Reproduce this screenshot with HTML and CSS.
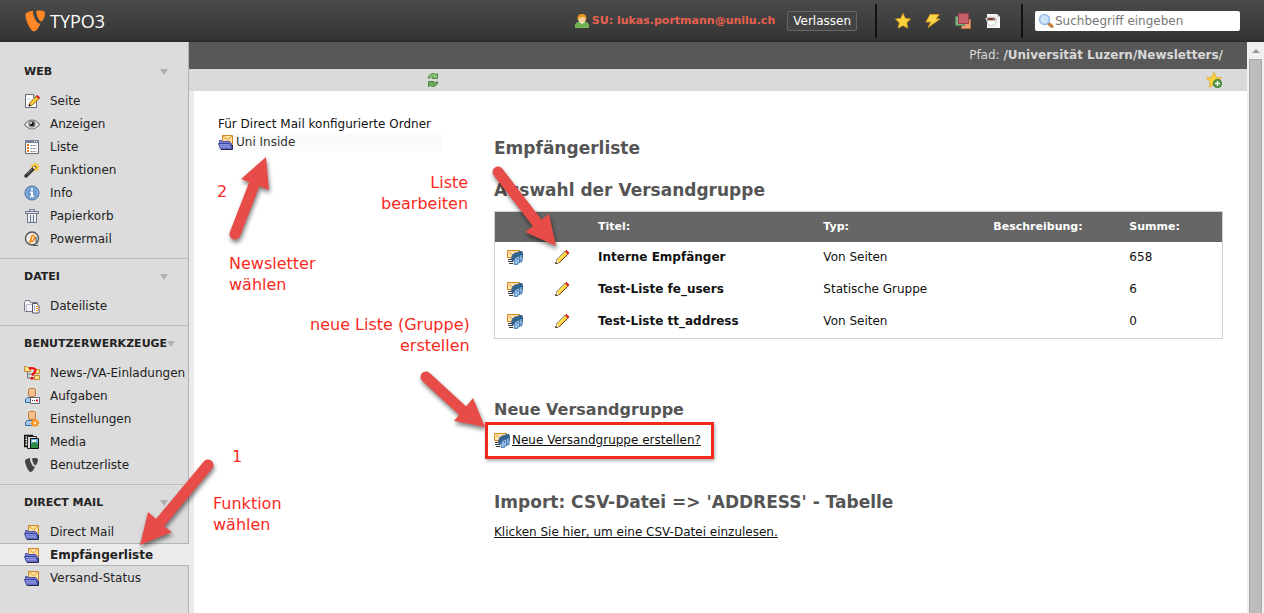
FILE: index.html
```
<!DOCTYPE html>
<html lang="de">
<head>
    <meta charset="UTF-8">
    <meta name="viewport" content="width=device-width, initial-scale=1.0">
    <title>TYPO3 - Empfängerliste</title>
    <link rel="stylesheet" href="styles.css">
</head>
<body>
    <!-- Icon sprite -->
    <svg class="sprite" width="0" height="0" aria-hidden="true">
        <symbol id="i-page" viewBox="0 0 16 16">
            <path d="M1.5 1.5h8l3 3v10h-11z" fill="#fff" stroke="#667"/>
            <path d="M9.500 1.500v3h3" fill="#cde" stroke="#778"/>
            <path d="M3 12h5M3 6h4" stroke="#ccd"/>
            <path d="M5 13l1-3.500 7-7 2.500 2.500-7 7z" fill="#fc3" stroke="#754a10" stroke-width=".8"/>
            <path d="M12 3.500l1.500-1.500 2.500 2.500-1.500 1.500z" fill="#d22"/>
            <path d="M5 13l.5-1.500 1 1z" fill="#111" stroke="#111"/>
        </symbol>
        <symbol id="i-eye" viewBox="0 0 16 16">
            <path d="M.5 8.500Q4 4 8 4t7.500 4.500Q12 13 8 13T.5 8.500z" fill="#eee" stroke="#777" stroke-width="1.200"/>
            <circle cx="8" cy="8" r="3.600" fill="#777"/>
            <circle cx="8" cy="8" r="1.900" fill="#111"/>
            <circle cx="7" cy="7" r="1" fill="#fff"/>
        </symbol>
        <symbol id="i-list" viewBox="0 0 16 16">
            <path d="M1.500 1.500h13v13h-13z" fill="#fff" stroke="#667"/>
            <path d="M1 1h14v3H1z" fill="#77839a"/>
            <path d="M12 2h1v1h-1zM10 2h1v1h-1z" fill="#fff"/>
            <path d="M3 5h2v2H3zM3 8h2v2H3zM3 11h2v2H3z" fill="#f07818"/>
            <path d="M6.500 6.500h6M6.500 9.500h6M6.500 12.500h6" stroke="#889" stroke-dasharray="2 .6"/>
        </symbol>
        <symbol id="i-wand" viewBox="0 0 16 16">
            <path d="M11 0l1 3 3-2-1 3 2 1-2 1 1 3-3-1-2 2-1-3-3 0 2-2-2-2 3 0z" fill="#fbc52c"/>
            <path d="M2 14l8.500-8.500" stroke="#333" stroke-width="3.400" stroke-linecap="round"/>
            <path d="M3 12l5-5" stroke="#888"/>
            <path d="M9.500 6.500l1.500-1.500" stroke="#fff3c0" stroke-width="2.500"/>
        </symbol>
        <symbol id="i-info" viewBox="0 0 16 16">
            <circle cx="8" cy="8" r="7" fill="#6c9bd2" stroke="#3f6ba5"/>
            <circle cx="8" cy="8" r="5.700" fill="none" stroke="#a9c6e8" stroke-width=".7"/>
            <path d="M7 3.500h2v2H7zM6 6.500h3v4h1v1.500H6v-1.500h1V8H6z" fill="#fff"/>
        </symbol>
        <symbol id="i-trash" viewBox="0 0 16 16">
            <path d="M5.500 3.500v-2h5v2M1.500 3.500h13v2h-13z" fill="#e7ebf0" stroke="#68758a"/>
            <path d="M3.500 6v8.500h9V6" fill="#f4f6f8" stroke="#68758a"/>
            <path d="M6.500 7v7M9.500 7v7" stroke="#68758a" stroke-width="1.200"/>
        </symbol>
        <symbol id="i-at" viewBox="0 0 16 16">
            <circle cx="8" cy="7.500" r="6.500" fill="#eee" stroke="#555" stroke-width="1.400"/>
            <path d="M5.500 12.500L8 4.500M7.500 5.500Q9 3.500 10.200 5t-.700 4-3 .500" fill="none" stroke="#f7931e" stroke-width="1.800"/>
            <path d="M12 6v4q.5 2 2 1M9 14.500h5" fill="none" stroke="#555" stroke-width="1.200"/>
        </symbol>
        <symbol id="i-files" viewBox="0 0 16 16">
            <path d="M.5 13V4.500l1-2h4l1 2h7v9H1z" fill="#f5f5f8" stroke="#778"/>
            <path d="M2.500 13V6.500h6" fill="none" stroke="#bbc"/>
            <path d="M8.500 5.500h4l2.500 2v7.500H8.500z" fill="#fff" stroke="#556"/>
            <path d="M10 8h1M10 10h1M10 12h1" stroke="#36c"/>
            <path d="M12 8.500h2M12 10.500h2M12 12.500h2" stroke="#e80"/>
        </symbol>
        <symbol id="i-news" viewBox="0 0 16 16">
            <path d="M.5 1.500h2l1 1h3v4h-6zM10.500 4.500h5v4h-5zM10.500 10.500h5v4h-5z" fill="#fbe38e" stroke="#c08a2c"/>
            <path d="M3.500 7v6h7M3.500 9h7" fill="none" stroke="#777"/>
            <path d="M5 4q2-1.500 5-.5t0 4.500l-2 2.500" fill="none" stroke="#e11" stroke-width="2.200"/>
            <path d="M6.500 12h3v2.500h-3z" fill="#e11"/>
        </symbol>
        <symbol id="i-user" viewBox="0 0 16 16">
            <path d="M1.500 14.500v-3.500l2-1.500h8l2 1.500v3.500z" fill="#a9c8e6" stroke="#2f6ca5"/>
            <rect x="4.500" y=".5" width="7" height="8" rx="2" fill="#f5c08a" stroke="#b8763a"/>
        </symbol>
        <symbol id="i-task" viewBox="0 0 16 16">
            <use href="#i-user"/>
            <path d="M6.500 9.500h9v6h-9z" fill="#fff" stroke="#667"/>
            <path d="M8 12.500h3" stroke="#333" stroke-dasharray="1"/>
            <path d="M12 11.500h2v2h-2z" fill="#e12"/>
        </symbol>
        <symbol id="i-setup" viewBox="0 0 16 16">
            <use href="#i-user"/>
            <path d="M11 7l1.300 2 2.200-.5-.5 2.200 2 1.300-2 1.300.5 2.200-2.200-.5L11 16l-1.300-1-2.200.5.5-2.200-2-1.300 2-1.300-.5-2.200 2.200.5z" fill="#f7931e"/>
            <circle cx="11" cy="12" r="1.500" fill="#fde2bd"/>
        </symbol>
        <symbol id="i-media" viewBox="0 0 16 16">
            <path d="M.5 1.500h8v11h-8z" fill="#fff" stroke="#111" stroke-width="1.500"/>
            <path d="M1.500 1v12" stroke="#111" stroke-width="2" stroke-dasharray="1.500 1"/>
            <path d="M3.500 2.500h9v12h-9z" fill="#ddd" stroke="#222"/>
            <path d="M6.500 4.500h8v10h-8z" fill="#68b6ea" stroke="#111"/>
            <path d="M7 10q4-4 7 0v4H7z" fill="#2f8a45"/>
            <path d="M8 6h4v2H8z" fill="#eaf6ff"/>
        </symbol>
        <symbol id="i-shield" viewBox="0 0 16 16">
            <path d="M11 9.500c-.3.100-.5.100-.8.100C8.200 9.600 6 4 6 2.200c0-.7.200-.9.400-1.100C4.400 1.300 2 2 1.300 3 1.100 3.200 1 3.600 1 4c0 3.100 3.300 11 5.700 11 1.100 0 3-1.800 4.300-5.500M10 1c2.200 0 4 .4 4 1.600 0 2.600-1.600 5.700-2.500 5.700C10 8.300 8.200 4.200 8.200 2.200 8.200 1.200 8.500 1 10 1"/>
        </symbol>
        <symbol id="i-mail" viewBox="0 0 16 16">
            <path d="M4.500 1.500h10v9h-10z" fill="#ffdf9c" stroke="#cf8a24"/>
            <path d="M5 2l4.500 4L14 2M11 7l3 3" fill="none" stroke="#dc9c3c"/>
            <path d="M1.500 9V6.500h2l1 1h7L13.500 10v5" fill="#7681cf" stroke="#4a54ac"/>
            <path d="M.5 9.500h11l2.500 5.500H2.500z" fill="#8993e2" stroke="#3c469c"/>
            <path d="M2.500 11.500h8.500M3.500 13.500h8.500" stroke="#5a65c0" stroke-dasharray="1"/>
            <path d="M14.500 11v4.500H3" fill="none" stroke="#23284f"/>
        </symbol>
        <symbol id="i-group" viewBox="0 0 16 16">
            <path d="M.5 1.500h12v7H.5z" fill="#ffe3b0" stroke="#d8861c"/>
            <path d="M2 3l4 3 4-3" fill="none" stroke="#e0a050"/>
            <path d="M1 10.500h4M1 12.500h5M2 14.500h4" stroke="#333"/>
            <path d="M9 4.500l3-2.500h3l1 2v3l-1 2h-2z" fill="#35648f"/>
            <path d="M13 6h2.500v2.500l.5 1.500h-1v3h-3V8z" fill="#8fbce8" stroke="#35648f" stroke-width=".7"/>
            <path d="M4 10l1-4 3-2.500h3.500L13 6l-2 2-2.500 1-1.500 3H5z" fill="#35648f"/>
            <path d="M8 9l3-1.500h1.500v2.500l1 1.500h-1v2.500h-2V15.500H7V12z" fill="#8fbce8" stroke="#35648f" stroke-width=".7"/>
            <path d="M10 9.500h1v1h-1zM14 7.500h1v1h-1z" fill="#1e4468"/>
        </symbol>
        <symbol id="i-pencil" viewBox="0 0 16 16">
            <path d="M1 14.500l1-4L10.500 2l3 2.500-9 9z" fill="#fdd73a" stroke="#5d3c08"/>
            <path d="M3 10.500l7-7" stroke="#fff2a8"/>
            <path d="M10 2.500L11.500 1 14.500 4 13 5.500z" fill="#e02020"/>
            <path d="M2 10.500l2.500 2.500L1 14.500z" fill="#ffe9c4"/>
            <path d="M.5 13l2 1.500-2 .5z" fill="#111"/>
        </symbol>
        <symbol id="i-be-user" viewBox="0 0 16 16">
            <path d="M1.500 14.500q-1-5.500 4.500-5.500h4q5.500 0 4.500 5.500z" fill="#6db04c" stroke="#8cc772" stroke-width=".8"/>
            <path d="M5 9q3 3.500 6 0" fill="#eaf6e0"/>
            <circle cx="8" cy="5.500" r="4" fill="#f9cf98"/>
            <path d="M3.500 6.500Q3 1 8 1t4.500 5.500q-1-3-4.500-2.500T3.500 6.500z" fill="#e8961c"/>
        </symbol>
        <symbol id="i-star" viewBox="0 0 16 16">
            <path d="M8 .5l2.300 4.900 5.200.7-3.800 3.700 1 5.300L8 12.600l-4.700 2.500 1-5.300L.5 6.100l5.200-.7z" fill="#fcd33c" stroke="#e3a51c" stroke-width=".8"/>
        </symbol>
        <symbol id="i-flash" viewBox="0 0 16 16">
            <path d="M5 1.500h9L11 6h4L3 14.500 6 9H1z" fill="#fbd548" stroke="#dd9a1e" stroke-width=".9"/>
        </symbol>
        <symbol id="i-workspace" viewBox="0 0 16 16">
            <path d="M6.500 6.500h9v9h-9z" fill="#e9a373" stroke="#b8713f"/>
            <path d="M.5 3.500h9v9h-9z" fill="#7fae85" stroke="#53855a"/>
            <path d="M3.500.500h10v10h-10z" fill="#c4606a" stroke="#9c3f4a"/>
        </symbol>
        <symbol id="i-open" viewBox="0 0 16 16">
            <path d="M2 1h10l3 3v11H2z" fill="#f7f7f7"/>
            <path d="M12 1v3h3" fill="#ccc"/>
            <path d="M2 5.500h9V9q-1 4-4.500 4T2 9z" fill="#fff" stroke="#aaa" stroke-width=".7"/>
            <ellipse cx="6" cy="6" rx="5.500" ry="1.900" fill="#e8e8e8" stroke="#999" stroke-width=".6"/>
            <ellipse cx="6" cy="6" rx="4" ry="1.100" fill="#7a3320"/>
        </symbol>
        <symbol id="i-search" viewBox="0 0 16 16">
            <path d="M10 10l4 3.500" stroke="#c67b3a" stroke-width="3" stroke-linecap="round"/>
            <circle cx="6.500" cy="6.500" r="5" fill="#cfe4fa" stroke="#94bce8" stroke-width="1.500"/>
        </symbol>
        <symbol id="i-refresh" viewBox="0 0 16 16">
            <path d="M3 6Q4 1.500 9 1.500l1.500 1 2-1V6.500H7l1.500-1.500Q6.500 4 5.500 6z" fill="#8cc77a" stroke="#387a2b" stroke-width=".8"/>
            <path d="M13 10q-1 4.500-6 4.500l-1.500-1-2 1V9.500H9L7.500 11q2 1 3-1z" fill="#6fae5c" stroke="#387a2b" stroke-width=".8"/>
        </symbol>
        <symbol id="i-shortcut" viewBox="0 0 16 16">
            <use href="#i-star"/>
            <circle cx="11.500" cy="11.500" r="4.300" fill="#4b9440" stroke="#2e6d28" stroke-width=".6"/>
            <path d="M11.500 9v5M9 11.500h5" stroke="#fff" stroke-width="1.300"/>
        </symbol>
    </svg>

    <header class="topbar">
        <a class="logo" href="#">
            <svg class="logo-mark"><use href="#i-shield"/></svg>
            <span>TYPO3</span>
        </a>
        <div class="topbar-user">
            <svg class="icon"><use href="#i-be-user"/></svg>
            <span class="username">SU: lukas.portmann@unilu.ch</span>
            <button class="logout" type="button">Verlassen</button>
        </div>
        <div class="topbar-tools">
            <button type="button" aria-label="Lesezeichen"><svg class="icon"><use href="#i-star"/></svg></button>
            <button type="button" aria-label="Cache löschen"><svg class="icon"><use href="#i-flash"/></svg></button>
            <button type="button" aria-label="Arbeitsumgebung"><svg class="icon"><use href="#i-workspace"/></svg></button>
            <button type="button" aria-label="Offene Dokumente"><svg class="icon"><use href="#i-open"/></svg></button>
        </div>
        <div class="topbar-search">
            <svg class="icon"><use href="#i-search"/></svg>
            <input type="text" aria-label="Suche" placeholder="Suchbegriff eingeben">
        </div>
    </header>

    <div class="layout">
        <nav class="sidebar">
            <section class="module-group">
                <h2>WEB</h2>
                <ul>
                    <li><a href="#"><svg class="icon"><use href="#i-page"/></svg>Seite</a></li>
                    <li><a href="#"><svg class="icon"><use href="#i-eye"/></svg>Anzeigen</a></li>
                    <li><a href="#"><svg class="icon"><use href="#i-list"/></svg>Liste</a></li>
                    <li><a href="#"><svg class="icon"><use href="#i-wand"/></svg>Funktionen</a></li>
                    <li><a href="#"><svg class="icon"><use href="#i-info"/></svg>Info</a></li>
                    <li><a href="#"><svg class="icon"><use href="#i-trash"/></svg>Papierkorb</a></li>
                    <li><a href="#"><svg class="icon"><use href="#i-at"/></svg>Powermail</a></li>
                </ul>
            </section>
            <section class="module-group">
                <h2>DATEI</h2>
                <ul>
                    <li><a href="#"><svg class="icon"><use href="#i-files"/></svg>Dateiliste</a></li>
                </ul>
            </section>
            <section class="module-group">
                <h2>BENUTZERWERKZEUGE</h2>
                <ul>
                    <li><a href="#"><svg class="icon"><use href="#i-news"/></svg>News-/VA-Einladungen</a></li>
                    <li><a href="#"><svg class="icon"><use href="#i-task"/></svg>Aufgaben</a></li>
                    <li><a href="#"><svg class="icon"><use href="#i-setup"/></svg>Einstellungen</a></li>
                    <li><a href="#"><svg class="icon"><use href="#i-media"/></svg>Media</a></li>
                    <li><a href="#"><svg class="icon icon-dark"><use href="#i-shield"/></svg>Benutzerliste</a></li>
                </ul>
            </section>
            <section class="module-group">
                <h2>DIRECT MAIL</h2>
                <ul>
                    <li><a href="#"><svg class="icon"><use href="#i-mail"/></svg>Direct Mail</a></li>
                    <li class="active"><a href="#"><svg class="icon"><use href="#i-mail"/></svg>Empfängerliste</a></li>
                    <li><a href="#"><svg class="icon"><use href="#i-mail"/></svg>Versand-Status</a></li>
                </ul>
            </section>
        </nav>

        <div class="main">
            <div class="path-bar">Pfad: <b>/Universität Luzern/Newsletters/</b></div>
            <div class="button-bar">
                <button type="button" aria-label="Neu laden"><svg class="icon"><use href="#i-refresh"/></svg></button>
                <button type="button" aria-label="Lesezeichen anlegen"><svg class="icon"><use href="#i-shortcut"/></svg></button>
            </div>
            <div class="content">
                <aside class="folders">
                    <p>Für Direct Mail konfigurierte Ordner</p>
                    <a href="#"><svg class="icon"><use href="#i-mail"/></svg>Uni Inside</a>
                </aside>
                <main class="module">
                    <h1>Empfängerliste</h1>
                    <h2>Auswahl der Versandgruppe</h2>
                    <table class="groups">
                        <thead>
                            <tr>
                                <th class="col-icon"></th>
                                <th class="col-edit"></th>
                                <th class="col-title">Titel:</th>
                                <th class="col-type">Typ:</th>
                                <th class="col-desc">Beschreibung:</th>
                                <th>Summe:</th>
                            </tr>
                        </thead>
                        <tbody>
                            <tr>
                                <td><svg class="icon"><use href="#i-group"/></svg></td>
                                <td><a href="#" aria-label="Bearbeiten"><svg class="icon"><use href="#i-pencil"/></svg></a></td>
                                <td><b>Interne Empfänger</b></td>
                                <td>Von Seiten</td>
                                <td></td>
                                <td>658</td>
                            </tr>
                            <tr>
                                <td><svg class="icon"><use href="#i-group"/></svg></td>
                                <td><a href="#" aria-label="Bearbeiten"><svg class="icon"><use href="#i-pencil"/></svg></a></td>
                                <td><b>Test-Liste fe_users</b></td>
                                <td>Statische Gruppe</td>
                                <td></td>
                                <td>6</td>
                            </tr>
                            <tr>
                                <td><svg class="icon"><use href="#i-group"/></svg></td>
                                <td><a href="#" aria-label="Bearbeiten"><svg class="icon"><use href="#i-pencil"/></svg></a></td>
                                <td><b>Test-Liste tt_address</b></td>
                                <td>Von Seiten</td>
                                <td></td>
                                <td>0</td>
                            </tr>
                        </tbody>
                    </table>
                    <section class="block">
                        <h2 class="subheading">Neue Versandgruppe</h2>
                        <div class="new-group">
                            <svg class="icon"><use href="#i-group"/></svg>
                            <a href="#">Neue Versandgruppe erstellen?</a>
                        </div>
                    </section>
                    <section class="block">
                        <h2>Import: CSV-Datei =&gt; 'ADDRESS' - Tabelle</h2>
                        <a href="#">Klicken Sie hier, um eine CSV-Datei einzulesen.</a>
                    </section>
                </main>
            </div>
        </div>

        <div class="scrollbar">
            <span class="scroll-up"></span>
            <span class="scroll-thumb"></span>
        </div>
    </div>

    <!-- Annotations on top of the page -->
    <svg class="arrows" width="600" height="600" viewBox="0 0 600 600" aria-hidden="true">
        <g>
            <path class="shaft" d="M208 465L159 524"/>
            <path d="M140 545l8-33 8 7 9 8 7 5z"/>
        </g>
        <g>
            <path class="shaft" d="M235 234L254 185"/>
            <path d="M266 157l-25 22 28 11z"/>
        </g>
        <g>
            <path class="shaft" d="M498 172L538 224"/>
            <path d="M556 246l-7-32-24 18z"/>
        </g>
        <g>
            <path class="shaft" d="M426 377L463 411"/>
            <path d="M485 427l-12-29-19 23z"/>
        </g>
    </svg>
    <div class="note note-1">1</div>
    <div class="note note-function">Funktion<br>wählen</div>
    <div class="note note-2">2</div>
    <div class="note note-newsletter">Newsletter<br>wählen</div>
    <div class="note note-edit">Liste<br>bearbeiten</div>
    <div class="note note-new">neue Liste (Gruppe)<br>erstellen</div>
    <div class="highlight"></div>
</body>
</html>
```
FILE: styles.css
```
* {
    box-sizing: border-box;
}

body {
    margin: 0;
    height: 100vh;
    display: flex;
    flex-direction: column;
    overflow: hidden;
    position: relative;
    font-family: Verdana, "DejaVu Sans", sans-serif;
    font-size: 12px;
    line-height: 18px;
    color: #111;
    background: #fff;
}

h1, h2, p, ul {
    margin: 0;
    padding: 0;
}

a {
    color: inherit;
}

button {
    font: inherit;
    padding: 0;
    border: 0;
    background: none;
    cursor: pointer;
}

.sprite {
    position: absolute;
}

.icon {
    display: block;
    flex: none;
    width: 16px;
    height: 16px;
}

.icon-dark {
    fill: #444;
}

/* Top bar */
.topbar {
    flex: none;
    display: flex;
    align-items: center;
    height: 42px;
    padding: 0 24px;
    background: linear-gradient(#4a4a4a, #363636 90%, #2a2a2a);
}

.logo {
    display: flex;
    align-items: center;
    gap: 2px;
    margin-right: auto;
    color: #fff;
    text-decoration: none;
    font-family: "Open Sans", sans-serif;
    font-size: 18px;
    line-height: 26px;
}

.logo-mark {
    width: 24px;
    height: 26px;
    fill: #ff8726;
}

.topbar-user {
    display: flex;
    align-items: center;
    gap: 2px;
    padding-right: 18px;
}

.username {
    color: #e8614f;
    font-size: 11px;
    font-weight: bold;
}

.logout {
    height: 20px;
    margin-left: 10px;
    padding: 0 5px;
    border: 1px solid #666;
    border-radius: 2px;
    background: #444;
    color: #fff;
}

.topbar-tools {
    display: flex;
    align-items: center;
    gap: 14px;
    height: 34px;
    padding: 0 20px 0 18px;
    border-left: 2px solid #111;
    border-right: 2px solid #111;
}

.topbar-search {
    position: relative;
    margin-left: 12px;
}

.topbar-search .icon {
    position: absolute;
    left: 3px;
    top: 2px;
}

.topbar-search input {
    display: block;
    width: 205px;
    height: 20px;
    padding: 0 4px 0 20px;
    border: 0;
    border-radius: 2px;
    background: #fff;
    font: inherit;
}

.topbar-search input::placeholder {
    color: #777;
}

/* Module menu */
.layout {
    flex: 1;
    display: flex;
    min-height: 0;
}

.sidebar {
    flex: none;
    width: 189px;
    padding-top: 12px;
    border-right: 1px solid #b4b4b4;
    background: #dcdcdc;
    color: #222;
}

.module-group {
    padding-bottom: 8px;
}

.module-group + .module-group {
    border-top: 1px solid #bebebe;
}

.module-group h2 {
    display: flex;
    align-items: center;
    justify-content: space-between;
    height: 35px;
    padding: 0 20px 0 24px;
    font-size: 11px;
}

.module-group h2::after {
    content: "";
    border: 4px solid transparent;
    border-top: 6px solid #b0b0b0;
    border-bottom: 0;
}

.module-group ul {
    list-style: none;
}

.module-group a {
    display: flex;
    align-items: center;
    gap: 10px;
    height: 23px;
    padding-left: 24px;
    text-decoration: none;
    white-space: nowrap;
}

.module-group .active {
    margin-right: -1px;
    border: 1px solid #b4b4b4;
    border-width: 1px 0;
    background: #ebebeb;
    font-weight: bold;
}

.module-group .active a {
    height: 21px;
}

/* Content frame */
.main {
    flex: 1;
    display: flex;
    flex-direction: column;
    min-width: 0;
}

.path-bar {
    height: 27px;
    padding-right: 24px;
    background: #585858;
    color: #d8d8d8;
    line-height: 27px;
    text-align: right;
}

.button-bar {
    display: flex;
    align-items: center;
    justify-content: space-between;
    height: 22px;
    padding: 0 25px 0 236px;
    background: #dadada;
}

.content {
    flex: 1;
    display: flex;
    gap: 53px;
    padding: 24px 24px 0;
    border-left: 5px solid #ebebeb;
}

.folders {
    flex: none;
    width: 223px;
}

.folders a {
    display: flex;
    align-items: center;
    gap: 2px;
    background: #fafafa;
    color: #333;
    text-decoration: none;
}

.module {
    flex: 1;
    min-width: 0;
    padding-top: 22px;
}

.module h1,
.module h2 {
    color: #555;
    font-size: 17px;
    line-height: 22px;
}

.module h1 {
    margin-bottom: 20px;
}

.module .subheading {
    font-size: 16px;
}

.groups {
    width: 100%;
    margin: 10px 0 60px;
    border: 1px solid #d0d0d0;
    border-spacing: 0;
    table-layout: fixed;
}

.groups th,
.groups td {
    height: 32px;
    padding: 0 12px 2px;
    text-align: left;
}

.groups th {
    height: 30px;
    padding: 0 0 0 12px;
    background: #666;
    color: #fff;
    font-size: 11px;
}

.groups .col-icon {
    width: 48px;
}

.groups .col-edit {
    width: 43px;
}

.groups .col-title {
    width: 31%;
}

.groups .col-type {
    width: 170px;
}

.groups .col-desc {
    width: 136px;
}

.block {
    margin-bottom: 42px;
}

.block h2 {
    margin-bottom: 10px;
}

.new-group {
    display: flex;
    align-items: center;
    gap: 2px;
}

/* Scrollbar */
.scrollbar {
    flex: none;
    display: flex;
    flex-direction: column;
    align-items: center;
    width: 17px;
    background: #f0f0f0;
}

.scroll-up {
    margin: 7px 0 6px;
    border: 4px solid transparent;
    border-top: 0;
    border-bottom: 4px solid #999;
}

.scroll-thumb {
    flex: 1;
    width: 13px;
    border: 1px solid #a8a8a8;
    border-bottom: 0;
    background: #bcbcbc;
}

/* Annotations */
.arrows {
    position: absolute;
    left: 0;
    top: 0;
    pointer-events: none;
}

.arrows g {
    fill: #e74c48;
    filter: drop-shadow(1px 3px 2px rgba(0, 0, 0, 0.5));
}

.arrows .shaft {
    stroke: #e74c48;
    stroke-width: 11px;
    stroke-linecap: round;
}

.note {
    position: absolute;
    color: #fa2a1e;
    font-family: "DejaVu Sans", sans-serif;
    font-size: 16px;
    line-height: 21px;
}

.note-1 {
    left: 232px;
    top: 446px;
}

.note-function {
    left: 213px;
    top: 493px;
}

.note-2 {
    left: 217px;
    top: 181px;
}

.note-newsletter {
    left: 229px;
    top: 253px;
}

.note-edit {
    left: 381px;
    top: 172px;
    text-align: right;
}

.note-new {
    left: 310px;
    top: 314px;
    text-align: right;
}

.highlight {
    position: absolute;
    left: 485px;
    top: 422px;
    width: 229px;
    height: 37px;
    border: 3px solid #f22a1c;
    box-shadow: 1px 2px 3px rgba(0, 0, 0, 0.3);
    pointer-events: none;
}
```
